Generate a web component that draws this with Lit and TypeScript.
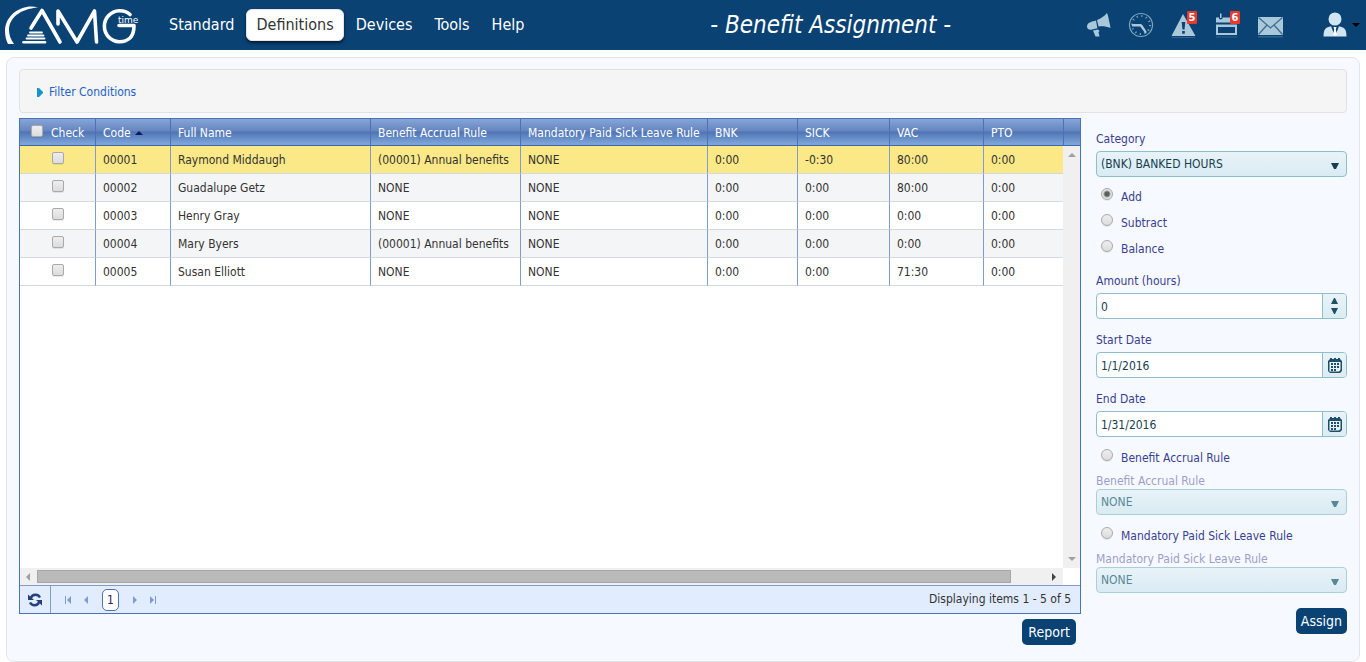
import { LitElement, html, css, svg } from "lit";
import { customElement, state } from "lit/decorators.js";
import { classMap } from "lit/directives/class-map.js";

interface Employee {
  code: string;
  name: string;
  accrual: string;
  sick: string;
  hours: string[];
}

const EMPLOYEES: Employee[] = [
  { code: "00001", name: "Raymond Middaugh", accrual: "(00001) Annual benefits", sick: "NONE", hours: ["0:00", "-0:30", "80:00", "0:00"] },
  { code: "00002", name: "Guadalupe Getz", accrual: "NONE", sick: "NONE", hours: ["0:00", "0:00", "80:00", "0:00"] },
  { code: "00003", name: "Henry Gray", accrual: "NONE", sick: "NONE", hours: ["0:00", "0:00", "0:00", "0:00"] },
  { code: "00004", name: "Mary Byers", accrual: "(00001) Annual benefits", sick: "NONE", hours: ["0:00", "0:00", "0:00", "0:00"] },
  { code: "00005", name: "Susan Elliott", accrual: "NONE", sick: "NONE", hours: ["0:00", "0:00", "71:30", "0:00"] },
];

const controls = css`
  * {
    box-sizing: border-box;
  }
  button,
  input,
  select {
    margin: 0;
    padding: 0;
    border: 0;
    background: none;
    font: inherit;
    color: inherit;
  }
  button {
    cursor: pointer;
  }
  svg {
    display: block;
  }
  input[type="checkbox"],
  input[type="radio"] {
    appearance: none;
    flex: none;
    width: 12px;
    height: 12px;
    border: 1px solid #a9a9a9;
    background: linear-gradient(#eeeeee, #dcdcdc);
    box-shadow: 0 1px 0 rgba(0, 0, 0, 0.08);
  }
  input[type="checkbox"] {
    border-radius: 2px;
  }
  input[type="checkbox"]:checked {
    background: #4f77b7;
  }
  input[type="radio"] {
    border-radius: 50%;
  }
  input[type="radio"]:checked {
    background: radial-gradient(circle, #5c5c5c 0 2px, #e4e4e4 4px);
  }
  .action {
    height: 26px;
    padding: 0 6px;
    border-radius: 5px;
    background: #094273;
    color: #fff;
    font-size: 14px;
  }
`;

@customElement("amg-header")
export class AmgHeader extends LitElement {
  @state() private active = "Definitions";

  static styles = [
    controls,
    css`
      :host {
        display: flex;
        align-items: center;
        height: 50px;
        background: #094273;
        color: #fff;
      }
      .logo {
        width: 159px;
        height: 50px;
        flex: none;
      }
      .logo-text {
        font: 9px "DejaVu Sans", sans-serif;
      }
      nav {
        display: flex;
        gap: 2px;
      }
      nav a {
        padding: 0 9px;
        border: 1px solid transparent;
        border-radius: 6px;
        color: #fff;
        font-size: 16px;
        line-height: 30px;
        text-decoration: none;
      }
      nav .active {
        border-color: #e6e6e6;
        background: #fff;
        color: #333;
        box-shadow: 0 2px 3px rgba(0, 0, 0, 0.6);
      }
      h1 {
        flex: 1;
        margin: 0 0 0 45px;
        font-size: 24px;
        font-style: italic;
        font-weight: 400;
        line-height: 50px;
        text-align: center;
        white-space: nowrap;
      }
      .tools {
        display: flex;
        gap: 11px;
        align-items: center;
        margin-right: 6px;
      }
      .tool {
        position: relative;
        width: 32px;
        height: 32px;
        color: #a9c8d9;
      }
      .tool svg {
        margin: 0 auto;
      }
      .badge {
        position: absolute;
        top: 2px;
        right: 3px;
        width: 10px;
        height: 13px;
        border-radius: 1px;
        background: #e8392b;
        color: #fff;
        font-size: 11px;
        font-weight: 700;
        line-height: 13px;
        text-align: center;
      }
      .user {
        display: flex;
        align-items: center;
        gap: 5px;
        margin-left: 26px;
      }
    `,
  ];

  private tool(label: string, icon: unknown, badge?: string) {
    return html`<button class="tool" type="button" aria-label=${label}>
      <svg width="28" height="28" viewBox="0 0 28 28" fill="currentColor">${icon}</svg>
      ${badge ? html`<span class="badge">${badge}</span>` : null}
    </button>`;
  }

  render() {
    return html`
      <svg class="logo" viewBox="0 0 159 50" role="img" aria-label="AMG time">
        <path fill="#fff" d="M38 7.500C25 3 5 13 5 31c0 5 1 9 3 13h6c-3-4-5-9-5-14C9 18 20 9 38 7.500z" />
        <g fill="none" stroke="#fff" stroke-width="3.600" stroke-linejoin="round" stroke-linecap="round">
          <path d="M31 28 42 10.500 60 42" />
          <path d="M58 24V11l19 31L94.500 11 96.500 42" />
          <path d="M130 14.500A15.500 15.500 0 1 0 130 38C133 35 134 31 134 25.500H119" />
          <path stroke-width="1.800" d="M30 32.500H42M28 35.500H43.500M26.500 38.500H44.500" />
          <path stroke-width="2.600" d="M23.500 42.200H45" />
        </g>
        <text class="logo-text" x="118" y="23" fill="#fff">time</text>
      </svg>
      <nav>
        ${["Standard", "Definitions", "Devices", "Tools", "Help"].map(
          (item) => html`<a
            href="#"
            class=${classMap({ active: item === this.active })}
            @click=${(e: Event) => {
              e.preventDefault();
              this.active = item;
            }}
            >${item}</a
          >`,
        )}
      </nav>
      <h1>- Benefit Assignment -</h1>
      <div class="tools">
        ${this.tool(
          "Announcements",
          svg`<path d="M13 9C17 7.500 20.500 5 23 2c1 1.500 1.400 4.500 2 7.500.500 2.500 1.300 5 1.500 7.500-4-1.500-8-2-12-1.500z"/>
            <path d="M12 9.500C8 10.500 3 11.500 3 15.500c0 3.400 3 3.400 5 3l5.400-1.200z"/>
            <path d="M9 19.500l5-1 1.500 1.500-1 1.300 1 4.200h-4z"/>`,
        )}
        ${this.tool(
          "Time clock",
          svg`<circle cx="14" cy="14" r="11.500" fill="none" stroke="#7fa6c0" stroke-width="1.200"/>
            <circle cx="14" cy="14" r="9" fill="none" stroke="#7fa6c0" stroke-width="2" stroke-dasharray="1.200 3.512"/>
            <path d="M5 13h7.500l1.500 0 1.500 1.200 4.500 7-1.800 1L13.200 15.500H5z"/>`,
        )}
        ${this.tool(
          "Alerts",
          svg`<path fill-rule="evenodd" d="M13 3 25.500 25H1.500zM11.700 11l.8 7.500h2l.8-7.500zM12.200 20v2.800h2.600V20z"/><path opacity=".25" d="M2 26h23v1H2z"/>`,
          "5",
        )}
        ${this.tool(
          "Calendar",
          svg`<path fill-rule="evenodd" d="M3 13.500h21V24H3zM5 16v6h17v-6z"/><path d="M3 6.500h3v1q1.500 2 3.500 0v-1H24v5H3z"/>
            <path d="M7 2.500h1.500V7H7z"/><path opacity=".25" d="M3 25.500h21v1H3z"/>`,
          "6",
        )}
        ${this.tool(
          "Messages",
          svg`<path d="M2 6h25v18H2z"/><path fill="none" stroke="#3d6f94" stroke-width="1.300" d="M2.500 6.500 14.500 17 26.500 6.500M2.500 23.500 11 14M26.500 23.500 18 14"/>
            <path opacity=".25" d="M2 25h25v1.500H2z"/>`,
        )}
        <button class="user" type="button" aria-label="User menu">
          <svg width="24" height="26" viewBox="0 0 24 26" fill="#cfe5f0">
            <ellipse cx="12" cy="7" rx="6.500" ry="6.600" />
            <path d="M.5 24.500c0-5 1-8 3.500-9l4-1.200 4 10.200zM23.500 24.500c0-5-1-8-3.500-9l-4-1.200-4 10.200z" />
            <path fill="#fff" d="M10.500 15h3l-.7 2.500 1.200 5-2 2-2-2 1.200-5z" />
          </svg>
          <svg width="8" height="4" viewBox="0 0 8 4"><path d="M0 0h8L4 4z" /></svg>
        </button>
      </div>
    `;
  }
}

@customElement("benefit-grid")
export class BenefitGrid extends LitElement {
  @state() private selected = "00001";

  static styles = [
    controls,
    css`
      :host {
        display: flex;
        flex-direction: column;
        border: 1px solid #4a72b5;
        background: #fff;
        color: #333;
      }
      .body {
        display: flex;
        flex: 1;
      }
      .content {
        flex: 1;
        min-width: 0;
      }
      table {
        width: 100%;
        border-collapse: separate;
        border-spacing: 0;
        table-layout: fixed;
      }
      th,
      .cap {
        height: 27px;
        border-bottom: 1px solid #3f68ab;
        background: linear-gradient(#86a5d7 0%, #6685bf 46%, #4e74b4 50%, #7ea5d9 96%);
      }
      th {
        padding: 2px 0 0 7px;
        border-right: 1px solid #4a72b5;
        color: #fff;
        font-weight: 400;
        text-align: left;
        white-space: nowrap;
      }
      td {
        height: 28px;
        padding: 0 0 0 7px;
        border-right: 1px solid #7f9dcb;
        border-bottom: 1px solid #d3d9e0;
        white-space: nowrap;
      }
      th:last-child,
      td:last-child {
        border-right: 0;
      }
      tr:nth-child(even) td {
        background: #f4f5f7;
      }
      tr.selected td {
        background: #fbe987;
      }
      .check-col {
        width: 76px;
      }
      .code-col {
        width: 75px;
      }
      .accrual-col {
        width: 150px;
      }
      .sick-col {
        width: 187px;
      }
      .bnk-col {
        width: 90px;
      }
      .sickh-col {
        width: 92px;
      }
      .vac-col {
        width: 94px;
      }
      .pto-col {
        width: 79px;
      }
      .all {
        display: flex;
        align-items: center;
        gap: 8px;
        padding-left: 4px;
      }
      .all input {
        margin-bottom: 4px;
      }
      .sort {
        display: flex;
        align-items: center;
        gap: 4px;
      }
      td.pick {
        padding: 0;
        text-align: center;
      }
      .side {
        display: flex;
        flex-direction: column;
        width: 17px;
      }
      .cap {
        border-left: 1px solid #4a72b5;
      }
      .vbar {
        display: flex;
        flex: 1;
        flex-direction: column;
        align-items: center;
        justify-content: space-between;
        padding: 7px 0;
        background: #f0f0f0;
      }
      .hbar {
        display: flex;
        align-items: center;
        gap: 7px;
        height: 17px;
        margin-right: 17px;
        padding: 0 7px 0 6px;
        background: #f0f0f0;
      }
      .track {
        flex: 1;
        padding-right: 34px;
      }
      .thumb {
        height: 13px;
        border: 1px solid #a6a6a6;
        background: #bababa;
      }
      .pager {
        display: flex;
        align-items: center;
        height: 28px;
        padding-right: 9px;
        border-top: 1px solid #7f9dcb;
        background: #e1ecfe;
      }
      .refresh {
        display: grid;
        place-items: center;
        width: 31px;
        height: 27px;
        border-right: 1px solid #7f9dcb;
      }
      .pages {
        display: flex;
        flex: 1;
        align-items: center;
        gap: 13px;
        padding-left: 14px;
        color: #7f9bd0;
      }
      .page {
        width: 17px;
        height: 22px;
        margin: 0 1px;
        border: 1px solid #4a72b5;
        border-radius: 5px;
        background: #fff;
        color: #3a2050;
      }
      .status {
        padding-bottom: 2px;
      }
    `,
  ];

  private arrow(d: string, w: number, h: number, fill: string) {
    return html`<svg width=${w} height=${h} viewBox="0 0 ${w} ${h}" fill=${fill}><path d=${d} /></svg>`;
  }

  render() {
    return html`
      <div class="body">
        <div class="content">
          <table>
            <colgroup>
              <col class="check-col" />
              <col class="code-col" />
              <col />
              <col class="accrual-col" />
              <col class="sick-col" />
              <col class="bnk-col" />
              <col class="sickh-col" />
              <col class="vac-col" />
              <col class="pto-col" />
            </colgroup>
            <thead>
              <tr>
                <th><label class="all"><input type="checkbox" />Check</label></th>
                <th><span class="sort">Code ${this.arrow("M0 4 4 0l4 4z", 8, 4, "#0b1a5c")}</span></th>
                <th>Full Name</th>
                <th>Benefit Accrual Rule</th>
                <th>Mandatory Paid Sick Leave Rule</th>
                <th>BNK</th>
                <th>SICK</th>
                <th>VAC</th>
                <th>PTO</th>
              </tr>
            </thead>
            <tbody>
              ${EMPLOYEES.map(
                (e) => html`<tr class=${classMap({ selected: e.code === this.selected })} @click=${() => (this.selected = e.code)}>
                  <td class="pick"><input type="checkbox" aria-label="Select ${e.name}" /></td>
                  <td>${e.code}</td>
                  <td>${e.name}</td>
                  <td>${e.accrual}</td>
                  <td>${e.sick}</td>
                  ${e.hours.map((h) => html`<td>${h}</td>`)}
                </tr>`,
              )}
            </tbody>
          </table>
        </div>
        <div class="side">
          <div class="cap"></div>
          <div class="vbar">
            ${this.arrow("M0 4 4 0l4 4z", 8, 4, "#a0a0a0")} ${this.arrow("M0 0h8L4 4z", 8, 4, "#a0a0a0")}
          </div>
        </div>
      </div>
      <div class="hbar">
        ${this.arrow("M4 0v8L0 4z", 4, 8, "#a0a0a0")}
        <div class="track"><div class="thumb"></div></div>
        ${this.arrow("M0 0v8l4-4z", 4, 8, "#444444")}
      </div>
      <div class="pager">
        <button class="refresh" type="button" aria-label="Refresh">
          <svg width="14" height="14" viewBox="0 0 14 14">
            <path fill="none" stroke="#24407c" stroke-width="2.400" d="M12 4.500C10 .8 4.500.8 2.800 5M2 9.500c2 3.700 7.500 3.700 9.200-.5" />
            <path fill="#24407c" d="M0 1.500V7h6zM14 12.500V7H8z" />
          </svg>
        </button>
        <div class="pages">
          <button type="button" aria-label="First page">${this.arrow("M0 0h1v8H0zM6 0v8L2 4z", 6, 8, "currentColor")}</button>
          <button type="button" aria-label="Previous page">${this.arrow("M4 0v8L0 4z", 4, 8, "currentColor")}</button>
          <button class="page" type="button">1</button>
          <button type="button" aria-label="Next page">${this.arrow("M0 0v8l4-4z", 4, 8, "currentColor")}</button>
          <button type="button" aria-label="Last page">${this.arrow("M0 0v8l4-4zM5 0h1v8H5z", 6, 8, "currentColor")}</button>
        </div>
        <span class="status">Displaying items 1 - 5 of 5</span>
      </div>
    `;
  }
}

@customElement("assign-form")
export class AssignForm extends LitElement {
  static styles = [
    controls,
    css`
      :host {
        display: flow-root;
        color: #3a3f8f;
      }
      .label {
        display: block;
        margin-top: 11px;
        padding-top: 2px;
        line-height: 16px;
      }
      .field {
        display: flex;
        height: 26px;
        margin: 4px 0 7px;
        border: 1px solid #8dbfd1;
        border-radius: 4px;
        background: #fff;
        color: #16404f;
        overflow: hidden;
      }
      .field input {
        flex: 1;
        min-width: 0;
        padding: 1px 4px 0;
      }
      .addon {
        display: grid;
        place-content: center;
        place-items: center;
        gap: 4px;
        width: 24px;
        border-left: 1px solid #8dbfd1;
        background: linear-gradient(#e8f3f8, #dcecf3);
      }
      .combo {
        display: flex;
        align-items: center;
        height: 26px;
        border: 1px solid #8dbfd1;
        border-radius: 4px;
        background: linear-gradient(#e8f3f8, #d9ebf3);
        color: #16404f;
      }
      .combo select {
        flex: 1;
        height: 24px;
        padding: 0 4px;
        appearance: none;
        opacity: 1;
      }
      .combo svg {
        margin: 3px 7px 0 0;
      }
      .main {
        margin: 4px 0 5px;
      }
      .dim {
        margin: 0;
        color: #9d9fca;
      }
      .disabled {
        border-color: #a9cfdc;
        color: #5a8797;
      }
      .choice {
        display: flex;
        align-items: center;
        gap: 8px;
        height: 26px;
        padding: 2px 0 0 5px;
      }
      .choice input {
        margin-bottom: 6px;
      }
      fieldset {
        margin: 0;
        padding: 0;
        border: 0;
      }
      fieldset .choice {
        padding-top: 4px;
      }
      .rule {
        margin: 7px 0 1px;
      }
      .foot {
        display: flex;
        justify-content: flex-end;
        margin-top: 15px;
      }
      .foot .action {
        padding: 0 5px;
      }
    `,
  ];

  private caret = html`<svg width="8" height="6" viewBox="0 0 8 6" fill="currentColor" aria-hidden="true"><path d="M0 0h8L5 6H3z" /></svg>`;

  private calendar = html`<svg width="14" height="15" viewBox="0 0 14 15" aria-hidden="true">
    <path fill="#1d5068" d="M2 1h10l2 2v10l-2 2H2l-2-2V3z" />
    <path fill="#1d5068" d="M2 0h2v2H2zM6 0h2v2H6zM10 0h2v2h-2z" />
    <path fill="#e6f2f7" d="M1.500 4h11v8L11 13.500H1.500z" />
    <path
      fill="#1d5068"
      d="M6 5h2v2H6zM9 5h2v2H9zM3 8h2v2H3zM6 8h2v2H6zM9 8h2v2H9zM3 11h2v2H3zM6 11h2v2H6zM3 5h2v2H3z"
    />
  </svg>`;

  private choice(label: string, checked = false) {
    return html`<label class="choice"><input type="radio" name="operation" .checked=${checked} />${label}</label>`;
  }

  private date(id: string, label: string, value: string) {
    return html`<label class="label" for=${id}>${label}</label>
      <div class="field">
        <input id=${id} type="text" .value=${value} />
        <button class="addon" type="button" aria-label="Open calendar">${this.calendar}</button>
      </div>`;
  }

  private rule(id: string, label: string) {
    return html`<div class="rule">${this.choice(label)}</div>
      <label class="label dim" for=${id}>${label}</label>
      <div class="combo disabled">
        <select id=${id} disabled>
          <option>NONE</option>
        </select>
        ${this.caret}
      </div>`;
  }

  render() {
    return html`
      <label class="label" for="category">Category</label>
      <div class="combo main">
        <select id="category">
          <option>(BNK) BANKED HOURS</option>
        </select>
        ${this.caret}
      </div>
      <fieldset aria-label="Operation">
        ${this.choice("Add", true)} ${this.choice("Subtract")} ${this.choice("Balance")}
      </fieldset>
      <label class="label" for="amount">Amount (hours)</label>
      <div class="field">
        <input id="amount" type="text" inputmode="numeric" value="0" />
        <div class="addon">
          <button type="button" aria-label="Increase">
            <svg width="7" height="6" viewBox="0 0 7 6" fill="#1d5068"><path d="M0 6 3 0h1l3 6z" /></svg>
          </button>
          <button type="button" aria-label="Decrease">
            <svg width="7" height="6" viewBox="0 0 7 6" fill="#1d5068"><path d="M0 0h7L4 6H3z" /></svg>
          </button>
        </div>
      </div>
      ${this.date("start", "Start Date", "1/1/2016")} ${this.date("end", "End Date", "1/31/2016")}
      ${this.rule("accrual", "Benefit Accrual Rule")} ${this.rule("sick", "Mandatory Paid Sick Leave Rule")}
      <div class="foot"><button class="action" type="button">Assign</button></div>
    `;
  }
}

@customElement("app-root")
export class AppRoot extends LitElement {
  static styles = [
    controls,
    css`
      :host {
        display: flex;
        flex-direction: column;
        box-sizing: border-box;
        min-height: 100vh;
        background: #fff;
        font: 12px/16px "DejaVu Sans Condensed", "DejaVu Sans", Tahoma, sans-serif;
      }
      main {
        display: flex;
        flex: 1;
        flex-direction: column;
        gap: 5px;
        margin: 7px 6px 0;
        padding: 11px 12px 16px;
        border: 1px solid #e1e4ea;
        border-radius: 8px;
        background: #f6f9ff;
      }
      .filter {
        padding: 14px 17px 12px;
        border: 1px solid #e2e2e2;
        border-radius: 4px;
        background: #f5f5f5;
      }
      .toggle {
        display: flex;
        align-items: center;
        gap: 6px;
        color: #1f62c4;
      }
      .columns {
        display: grid;
        flex: 1;
        grid-template-columns: minmax(0, 1fr) 251px;
        gap: 15px;
      }
      .left {
        display: flex;
        flex-direction: column;
        gap: 5px;
      }
      benefit-grid {
        flex: 1;
      }
      .report {
        align-self: flex-end;
        margin-right: 5px;
      }
    `,
  ];

  render() {
    return html`
      <amg-header></amg-header>
      <main>
        <section class="filter">
          <button class="toggle" type="button" aria-expanded="false">
            <svg width="6" height="9" viewBox="0 0 6 9" fill="#1695cc"><path d="M0 0h2l4 4v1L2 9H0z" /></svg>
            Filter Conditions
          </button>
        </section>
        <div class="columns">
          <div class="left">
            <benefit-grid></benefit-grid>
            <button class="action report" type="button">Report</button>
          </div>
          <assign-form></assign-form>
        </div>
      </main>
    `;
  }
}
